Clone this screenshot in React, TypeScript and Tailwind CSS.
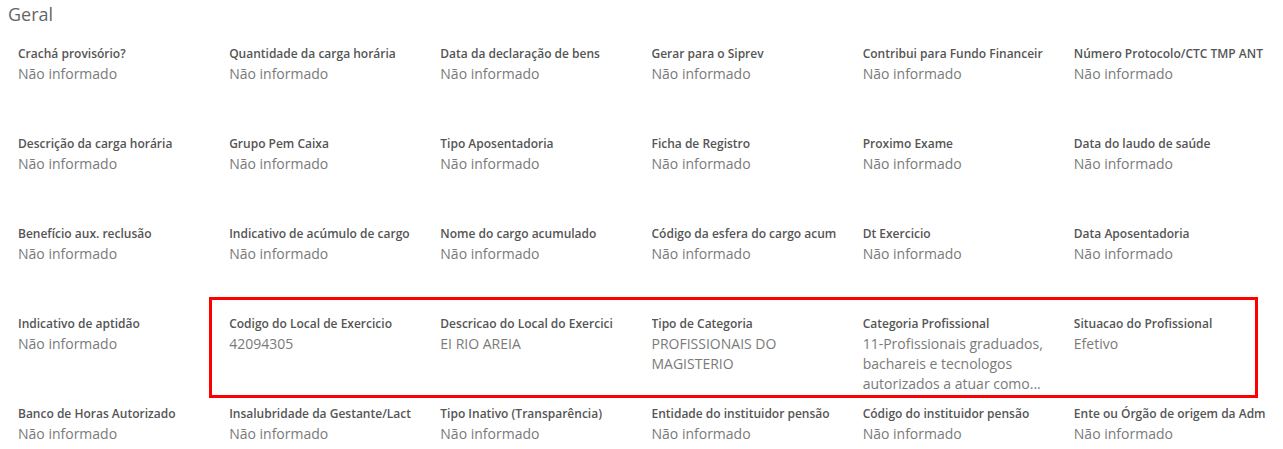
const font = { fontFamily: '"Open Sans", "Noto Sans", Arial, sans-serif' };

type Field = { label: string; value?: string };

const fields: Field[] = [
  { label: 'Crachá provisório?' },
  { label: 'Quantidade da carga horária' },
  { label: 'Data da declaração de bens' },
  { label: 'Gerar para o Siprev' },
  { label: 'Contribui para Fundo Financeir' },
  { label: 'Número Protocolo/CTC TMP ANT' },
  { label: 'Descrição da carga horária' },
  { label: 'Grupo Pem Caixa' },
  { label: 'Tipo Aposentadoria' },
  { label: 'Ficha de Registro' },
  { label: 'Proximo Exame' },
  { label: 'Data do laudo de saúde' },
  { label: 'Benefício aux. reclusão' },
  { label: 'Indicativo de acúmulo de cargo' },
  { label: 'Nome do cargo acumulado' },
  { label: 'Código da esfera do cargo acum' },
  { label: 'Dt Exercicio' },
  { label: 'Data Aposentadoria' },
  { label: 'Indicativo de aptidão' },
  { label: 'Codigo do Local de Exercicio', value: '42094305' },
  { label: 'Descricao do Local do Exercici', value: 'EI RIO AREIA' },
  { label: 'Tipo de Categoria', value: 'PROFISSIONAIS DO MAGISTERIO' },
  {
    label: 'Categoria Profissional',
    value: '11-Profissionais graduados, bachareis e tecnologos autorizados a atuar como...',
  },
  { label: 'Situacao do Profissional', value: 'Efetivo' },
  { label: 'Banco de Horas Autorizado' },
  { label: 'Insalubridade da Gestante/Lact' },
  { label: 'Tipo Inativo (Transparência)' },
  { label: 'Entidade do instituidor pensão' },
  { label: 'Código do instituidor pensão' },
  { label: 'Ente ou Órgão de origem da Adm' },
];

export default function App() {
  return (
    <div className="relative h-[449px] overflow-hidden bg-white" style={font}>
      <h2 className="px-2 pt-[2px] text-[18px] leading-6 text-[#666] font-normal mb-[18px]">Geral</h2>

      <div className="grid grid-cols-6 px-2">
        {fields.map((f) => (
          <div key={f.label} className="h-[90px] pl-[10px] pr-1 min-w-0">
            <div className="text-[12px] leading-5 font-semibold text-[#555] whitespace-nowrap overflow-hidden">
              {f.label}
            </div>
            <div className="text-[14px] leading-5 text-[#7a7a7a] line-clamp-3">
              {f.value ?? 'Não informado'}
            </div>
          </div>
        ))}
      </div>

      {/* highlight annotation */}
      <div className="absolute left-[209px] top-[297px] w-[1049px] h-[101px] border-[3px] border-[#f00] pointer-events-none" />
    </div>
  );
}
